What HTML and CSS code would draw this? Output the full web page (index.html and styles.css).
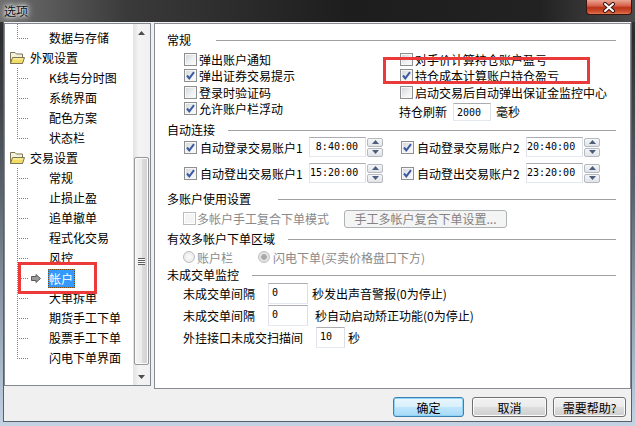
FILE: index.html
```html
<!DOCTYPE html>
<html lang="zh-CN">
<head>
<meta charset="utf-8">
<title>选项</title>
<link rel="stylesheet" href="styles.css">
</head>
<body>
<div class="win">
  <div class="titlebar">
    <span class="title">选项</span>
    <div class="close">
      <svg width="14" height="11" viewBox="0 0 14 11"><path d="M3 2 L11 9 M11 2 L3 9" stroke="#3a1510" stroke-width="4" stroke-linecap="round"/><path d="M3 2 L11 9 M11 2 L3 9" stroke="#fff" stroke-width="2" stroke-linecap="round"/></svg>
    </div>
  </div>
  <div class="client">
    <div class="main">
      <div class="tree">
        <div class="tree-list">
          <div class="spacer"></div>
          <div class="node child last"><span class="label">数据与存储</span></div>
          <div class="node folder">
            <svg class="fold" width="16" height="14" viewBox="0 0 16 14"><path d="M1.5 1.5 H6 L7.5 3 H13.5 V12.5 H1.5 Z" fill="#f3f0dc" stroke="#7d7558"/><path d="M1.5 12.5 L3.5 6.5 H15.5 L13.5 12.5 Z" fill="#f2dc63" stroke="#7d7558"/><path d="M4 8 H14" stroke="#fff6b8"/></svg>
            <span class="label">外观设置</span>
          </div>
          <div class="node child"><span class="label">K线与分时图</span></div>
          <div class="node child"><span class="label">系统界面</span></div>
          <div class="node child"><span class="label">配色方案</span></div>
          <div class="node child last"><span class="label">状态栏</span></div>
          <div class="node folder">
            <svg class="fold" width="16" height="14" viewBox="0 0 16 14"><path d="M1.5 1.5 H6 L7.5 3 H13.5 V12.5 H1.5 Z" fill="#f3f0dc" stroke="#7d7558"/><path d="M1.5 12.5 L3.5 6.5 H15.5 L13.5 12.5 Z" fill="#f2dc63" stroke="#7d7558"/><path d="M4 8 H14" stroke="#fff6b8"/></svg>
            <span class="label">交易设置</span>
          </div>
          <div class="node child"><span class="label">常规</span></div>
          <div class="node child"><span class="label">止损止盈</span></div>
          <div class="node child"><span class="label">追单撤单</span></div>
          <div class="node child"><span class="label">程式化交易</span></div>
          <div class="node child"><span class="label">风控</span></div>
          <div class="node child current">
            <svg class="arrow" width="10" height="9" viewBox="0 0 10 9"><path d="M0.5 2.5 H5 V0.5 L9.5 4.5 L5 8.5 V6.5 H0.5 Z" fill="#9a9a9a" stroke="#5a5a5a"/></svg>
            <span class="label sel">帐户</span>
          </div>
          <div class="node child"><span class="label">大单拆单</span></div>
          <div class="node child"><span class="label">期货手工下单</span></div>
          <div class="node child"><span class="label">股票手工下单</span></div>
          <div class="node child last"><span class="label">闪电下单界面</span></div>
        </div>
        <div class="vscroll">
          <div class="sb-btn"><svg width="7" height="4" viewBox="0 0 7 4"><path d="M0 4 L3.5 0 L7 4 Z" fill="#4d4d4d"/></svg></div>
          <div class="sb-track top"></div>
          <div class="sb-thumb"><span class="grip"></span></div>
          <div class="sb-track bottom"></div>
          <div class="sb-btn"><svg width="7" height="4" viewBox="0 0 7 4"><path d="M0 0 L3.5 4 L7 0 Z" fill="#4d4d4d"/></svg></div>
        </div>
      </div>

      <div class="panel">
        <div class="hdr"><span>常规</span><i class="rule r-general"></i></div>
        <div class="general">
          <div class="col col-left">
            <div class="opt"><span class="cb"></span>弹出账户通知</div>
            <div class="opt"><span class="cb"><svg width="11" height="11" viewBox="0 0 11 11"><path d="M2 5.5 L4.3 8.3 L9 2.2" fill="none" stroke="#3b58a0" stroke-width="2"/></svg></span>弹出证券交易提示</div>
            <div class="opt"><span class="cb"></span>登录时验证码</div>
            <div class="opt"><span class="cb"><svg width="11" height="11" viewBox="0 0 11 11"><path d="M2 5.5 L4.3 8.3 L9 2.2" fill="none" stroke="#3b58a0" stroke-width="2"/></svg></span>允许账户栏浮动</div>
          </div>
          <div class="col">
            <div class="opt"><span class="cb"></span>对手价计算持仓账户盈亏</div>
            <div class="opt"><span class="cb"><svg width="11" height="11" viewBox="0 0 11 11"><path d="M2 5.5 L4.3 8.3 L9 2.2" fill="none" stroke="#3b58a0" stroke-width="2"/></svg></span>持仓成本计算账户持仓盈亏</div>
            <div class="opt"><span class="cb"></span>启动交易后自动弹出保证金监控中心</div>
            <div class="refresh">持仓刷新<span class="edit e-refresh">2000</span>毫秒</div>
          </div>
        </div>

        <div class="hdr"><span>自动连接</span><i class="rule"></i></div>
        <div class="autoconn">
          <div class="trow"><span class="cb"><svg width="11" height="11" viewBox="0 0 11 11"><path d="M2 5.5 L4.3 8.3 L9 2.2" fill="none" stroke="#3b58a0" stroke-width="2"/></svg></span><span class="lab">自动登录交易账户1</span><span class="tbox">8:40:00</span><span class="spin"><span class="sp"><svg width="7" height="4" viewBox="0 0 7 4"><path d="M0 4 L3.5 0 L7 4 Z" fill="#4b5e7e"/></svg></span><span class="sp"><svg width="7" height="4" viewBox="0 0 7 4"><path d="M0 0 L3.5 4 L7 0 Z" fill="#4b5e7e"/></svg></span></span></div>
          <div class="trow"><span class="cb"><svg width="11" height="11" viewBox="0 0 11 11"><path d="M2 5.5 L4.3 8.3 L9 2.2" fill="none" stroke="#3b58a0" stroke-width="2"/></svg></span><span class="lab">自动登录交易账户2</span><span class="tbox">20:40:00</span><span class="spin"><span class="sp"><svg width="7" height="4" viewBox="0 0 7 4"><path d="M0 4 L3.5 0 L7 4 Z" fill="#4b5e7e"/></svg></span><span class="sp"><svg width="7" height="4" viewBox="0 0 7 4"><path d="M0 0 L3.5 4 L7 0 Z" fill="#4b5e7e"/></svg></span></span></div>
          <div class="trow"><span class="cb"><svg width="11" height="11" viewBox="0 0 11 11"><path d="M2 5.5 L4.3 8.3 L9 2.2" fill="none" stroke="#3b58a0" stroke-width="2"/></svg></span><span class="lab">自动登出交易账户1</span><span class="tbox">15:20:00</span><span class="spin"><span class="sp"><svg width="7" height="4" viewBox="0 0 7 4"><path d="M0 4 L3.5 0 L7 4 Z" fill="#4b5e7e"/></svg></span><span class="sp"><svg width="7" height="4" viewBox="0 0 7 4"><path d="M0 0 L3.5 4 L7 0 Z" fill="#4b5e7e"/></svg></span></span></div>
          <div class="trow"><span class="cb"><svg width="11" height="11" viewBox="0 0 11 11"><path d="M2 5.5 L4.3 8.3 L9 2.2" fill="none" stroke="#3b58a0" stroke-width="2"/></svg></span><span class="lab">自动登出交易账户2</span><span class="tbox">23:20:00</span><span class="spin"><span class="sp"><svg width="7" height="4" viewBox="0 0 7 4"><path d="M0 4 L3.5 0 L7 4 Z" fill="#4b5e7e"/></svg></span><span class="sp"><svg width="7" height="4" viewBox="0 0 7 4"><path d="M0 0 L3.5 4 L7 0 Z" fill="#4b5e7e"/></svg></span></span></div>
        </div>

        <div class="hdr h-multi"><span>多账户使用设置</span><i class="rule r-multi"></i></div>
        <div class="mrow"><span class="cb dis"></span>多帐户手工复合下单模式<span class="btn-dis">手工多帐户复合下单设置...</span></div>

        <div class="hdr h-area"><span>有效多帐户下单区域</span><i class="rule"></i></div>
        <div class="rrow"><span class="radio"></span>账户栏<span class="radio on r2"></span><span class="r2-text">闪电下单(买卖价格盘口下方)</span></div>

        <div class="hdr h-mon"><span>未成交单监控</span><i class="rule"></i></div>
        <div class="mon"><span class="lab1">未成交单间隔</span><span class="edit e40">0</span><span class="after1">秒发出声音警报(0为停止)</span></div>
        <div class="mon"><span class="lab1">未成交单间隔</span><span class="edit e40">0</span><span class="after2">秒自动启动矫正功能(0为停止)</span></div>
        <div class="mon"><span class="lab3">外挂接口未成交扫描间</span><span class="edit e29">10</span><span class="after3">秒</span></div>
      </div>
    </div>
    <div class="footer">
      <span class="btn default b-ok">确定</span>
      <span class="btn b-cancel">取消</span>
      <span class="btn b-help">需要帮助?</span>
    </div>
  </div>
</div>
<div class="mark mark-tree"></div>
<div class="mark mark-opt"></div>
</body>
</html>
```

FILE: styles.css
```css
html, body {
  margin: 0;
  padding: 0;
}
body {
  width: 635px;
  height: 426px;
  overflow: hidden;
  position: relative;
  font-family: "Noto Sans CJK SC", "Noto Sans", sans-serif;
  font-size: 12px;
  color: #000;
  background: linear-gradient(to bottom, #3c3c3c 0%, #2c2c2c 8%, #5b636c 45%, #a7b7c7 85%, #c3d3e3 100%);
}
.win {
  height: 426px;
  display: flex;
  flex-direction: column;
}
.titlebar {
  height: 22px;
  flex: none;
  display: flex;
  justify-content: space-between;
  align-items: flex-start;
  background: linear-gradient(to right, #6e6e6e 0%, #3a3a3a 20%, #1d1d1d 55%, #222 85%, #4a4a4a 100%);
}
.title {
  padding-left: 4px;
  line-height: 22px;
  color: #111;
  text-shadow: 0 0 3px #fff, 0 0 6px #fff, 0 0 9px rgba(255,255,255,.8);
}
.close {
  width: 46px;
  height: 15px;
  margin-right: 3px;
  box-sizing: border-box;
  border: 1px solid #3b1410;
  border-top: none;
  border-radius: 0 0 4px 4px;
  background: linear-gradient(#e9a595 0%, #d8644c 40%, #b93219 55%, #cf5230 85%, #e07a50 100%);
  display: flex;
  align-items: center;
  justify-content: center;
}
.client {
  flex: none;
  height: 400px;
  margin: 0 3px;
  box-sizing: border-box;
  border: 1px solid #56606a;
  border-top: none;
  background: #f0f0f0;
  padding-top: 1px;
  display: flex;
  flex-direction: column;
}
.main {
  height: 366px;
  flex: none;
  display: flex;
  gap: 3px;
}

/* tree */
.tree {
  width: 147px;
  height: 363px;
  flex: none;
  box-sizing: border-box;
  border: 1px solid #828790;
  background: #fff;
  display: flex;
}
.tree-list {
  flex: 1;
  overflow: hidden;
}
.spacer {
  height: 4px;
  background: repeating-linear-gradient(to bottom, #808080 0 1px, transparent 1px 2px) 12px 0 / 1px 100% no-repeat;
}
.node {
  height: 20px;
  display: flex;
  align-items: center;
  white-space: nowrap;
}
.child {
  background:
    repeating-linear-gradient(to bottom, #808080 0 1px, transparent 1px 2px) 12px 0 / 1px 100% no-repeat,
    repeating-linear-gradient(to right, #808080 0 1px, transparent 1px 2px) 12px 10px / 11px 1px no-repeat;
}
.child.last {
  background:
    repeating-linear-gradient(to bottom, #808080 0 1px, transparent 1px 2px) 12px 0 / 1px 11px no-repeat,
    repeating-linear-gradient(to right, #808080 0 1px, transparent 1px 2px) 12px 10px / 11px 1px no-repeat;
}
.label {
  padding: 0 1px;
  line-height: 18px;
}
.child .label {
  margin-left: 43px;
}
.folder {
  padding-left: 4px;
}
.folder .label {
  margin-left: 4px;
}
.fold {
  flex: none;
}
.current .arrow {
  margin-left: 26px;
  flex: none;
}
.current .label.sel {
  margin-left: 7px;
  background: #3399ff;
  color: #fff;
  height: 19px;
  line-height: 19px;
  padding: 0 2px 0 1px;
  outline: 1px dotted #7a4a10;
  outline-offset: -1px;
}
.vscroll {
  width: 17px;
  flex: none;
  display: flex;
  flex-direction: column;
  background: linear-gradient(to right, #e2e2e2 0%, #f4f4f4 35%, #f0f0f0 100%);
}
.sb-btn {
  height: 17px;
  flex: none;
  display: flex;
  align-items: center;
  justify-content: center;
}
.sb-track.top {
  height: 116px;
  flex: none;
}
.sb-track.bottom {
  flex: 1;
}
.sb-thumb {
  height: 208px;
  flex: none;
  margin: 0 1px;
  box-sizing: border-box;
  border: 1px solid #979797;
  border-radius: 2px;
  background: linear-gradient(to right, #f4f4f4 0%, #ececec 50%, #dcdcdc 51%, #d2d2d2 100%);
  box-shadow: inset 0 0 0 1px #fafafa;
  display: flex;
  align-items: center;
  justify-content: center;
}
.grip {
  width: 7px;
  height: 7px;
  background: repeating-linear-gradient(to bottom, #5e5e5e 0 1px, #f8f8f8 1px 2px);
}

/* right panel */
.panel {
  flex: 1;
  height: 366px;
  box-sizing: border-box;
  border: 1px solid #898c95;
  background: #fff;
  padding: 9px 0 0 12px;
  white-space: nowrap;
}
.hdr {
  height: 14px;
  display: flex;
  align-items: center;
  line-height: 14px;
}
.rule {
  flex: 1;
  height: 1px;
  background: #a0a0a0;
  margin: 1px 14px 0 13px;
}
.rule.r-general {
  margin-left: 25px;
}
.rule.r-multi {
  margin-left: 27px;
}
.general {
  display: flex;
  margin-top: 4px;
  padding-left: 17px;
}
.col-left {
  width: 216px;
  flex: none;
}
.opt {
  height: 16.5px;
  display: flex;
  align-items: center;
  gap: 2px;
}
.cb {
  width: 13px;
  height: 13px;
  flex: none;
  box-sizing: border-box;
  border: 1px solid #8e8f8f;
  background: linear-gradient(135deg, #cfd3d8 0%, #eef0f2 55%, #fbfbfb 100%);
  box-shadow: inset 0 0 0 1px #f6f6f6;
  display: inline-flex;
}
.cb.dis {
  border-color: #bcbcbc;
  background: #f4f4f4;
  box-shadow: inset 0 0 0 1px #fff;
}
.refresh {
  height: 22px;
  display: flex;
  align-items: center;
  margin-left: -1px;
}
.edit {
  box-sizing: border-box;
  border: 1px solid;
  border-color: #abadb3 #dbdfe6 #e3e9ef #e2e3ea;
  background: #fff;
  font-family: "DejaVu Sans Mono", "Liberation Mono", monospace;
  font-size: 10px;
  line-height: 13px;
  padding: 2px 3px 0;
  flex: none;
}
.e-refresh {
  width: 38px;
  height: 18px;
  margin: 0 5px 0 6px;
}
.autoconn {
  display: grid;
  grid-template-columns: 217px auto;
  row-gap: 5px;
  padding-left: 17px;
}
.trow {
  height: 21px;
  display: flex;
  align-items: center;
}
.trow .cb {
  margin-right: 3px;
}
.trow .lab {
  width: 106px;
  margin-right: 3px;
  flex: none;
}
.tbox {
  width: 57px;
  height: 20px;
  flex: none;
  box-sizing: border-box;
  border: 1px solid;
  border-color: #abadb3 #dbdfe6 #e3e9ef #e2e3ea;
  background: #fff;
  font-family: "DejaVu Sans Mono", "Liberation Mono", monospace;
  font-size: 10px;
  line-height: 18px;
  text-align: right;
  padding-right: 7px;
}
.spin {
  width: 16px;
  height: 19px;
  margin-left: 1px;
  display: flex;
  flex-direction: column;
  gap: 1px;
}
.sp {
  flex: 1;
  box-sizing: border-box;
  border: 1px solid #b5b9c0;
  border-radius: 2px;
  background: linear-gradient(#f6f6f6, #e2e4e8);
  display: flex;
  align-items: center;
  justify-content: center;
}
.h-multi {
  margin-top: 8.5px;
}
.mrow {
  height: 19px;
  margin-top: 3px;
  padding-left: 16px;
  display: flex;
  align-items: center;
  color: #8a8a8a;
}
.mrow .cb {
  margin-right: 1px;
}
.btn-dis {
  margin-left: 15px;
  width: 163px;
  height: 18px;
  box-sizing: border-box;
  border: 1px solid #adb2b5;
  border-radius: 3px;
  background: #f4f4f4;
  color: #838383;
  display: flex;
  align-items: center;
  justify-content: center;
}
.h-area {
  margin-top: 4px;
}
.rrow {
  height: 18px;
  margin-top: 2px;
  padding-left: 16px;
  display: flex;
  align-items: center;
  color: #8a8a8a;
}
.radio {
  width: 12px;
  height: 12px;
  flex: none;
  box-sizing: border-box;
  border: 1px solid #bcbcbc;
  border-radius: 50%;
  background: radial-gradient(circle, #fafafa 0%, #e6e6e6 100%);
  margin-right: 2px;
}
.radio.on {
  background: radial-gradient(circle, #a8a8a8 0 2.5px, #dcdcdc 3px, #f4f4f4 100%);
}
.radio.r2 {
  margin-left: 25px;
  margin-right: 3px;
}
.h-mon {
  margin-top: 2px;
}
.mon {
  height: 22px;
  padding-left: 16px;
  display: flex;
  align-items: center;
}
.lab1 {
  width: 85px;
  flex: none;
}
.lab3 {
  width: 133px;
  flex: none;
}
.e40 {
  width: 40px;
  height: 21px;
}
.e29 {
  width: 29px;
  height: 21px;
}
.after1 {
  margin-left: 4px;
}
.after2 {
  margin-left: 7px;
}
.after3 {
  margin-left: 3px;
}

/* footer */
.footer {
  height: 32px;
  flex: none;
  box-sizing: border-box;
  padding: 8px 5px 0 0;
  display: flex;
  justify-content: flex-end;
  align-items: flex-start;
}
.btn {
  height: 20px;
  box-sizing: border-box;
  border: 1px solid #707070;
  border-radius: 3px;
  background: linear-gradient(#f2f2f2 0%, #ebebeb 48%, #dddddd 52%, #cfcfcf 100%);
  box-shadow: inset 0 0 0 1px #fcfcfc;
  display: flex;
  align-items: center;
  justify-content: center;
}
.btn.default {
  border-color: #3c7fb1;
  background: linear-gradient(#eaf6fd 0%, #d9f0fc 48%, #bee6fd 52%, #a7d9f5 100%);
  box-shadow: inset 0 0 0 1px #8fd3f7;
}
.b-ok {
  width: 71px;
}
.b-cancel {
  width: 75px;
  margin-left: 8px;
}
.b-help {
  width: 73px;
  margin-left: 6px;
}

/* annotation overlays */
.mark {
  position: absolute;
  box-sizing: border-box;
  border: 3px solid #ec3a3a;
}
.mark-tree {
  left: 18px;
  top: 262px;
  width: 79px;
  height: 32px;
}
.mark-opt {
  left: 383px;
  top: 57px;
  width: 207px;
  height: 27px;
}
```
